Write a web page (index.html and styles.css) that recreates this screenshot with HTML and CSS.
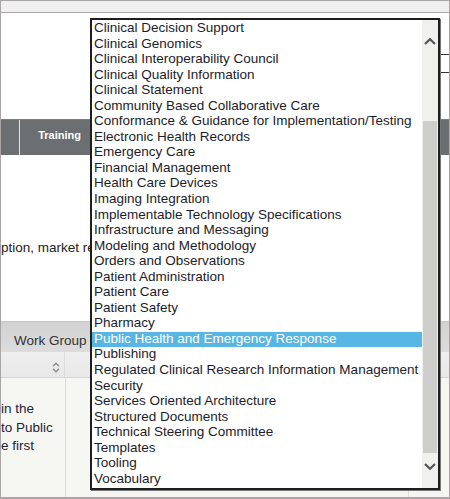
FILE: index.html
```html
<!DOCTYPE html>
<html lang="en">
<head>
    <meta charset="UTF-8">
    <meta name="viewport" content="width=device-width, initial-scale=1.0">
    <title>Work Groups</title>
    <link rel="stylesheet" href="styles.css">
</head>
<body>
    <div class="frame">
        <div class="topbar"></div>

        <div class="header">
            <div class="search"></div>
        </div>

        <div class="nav">
            <div class="nav-item nav-first"></div>
            <div class="nav-item">Training</div>
        </div>

        <div class="content">
            <p class="intro">ption, market re</p>
        </div>

        <div class="tabs">
            <div class="tab">Work Group</div>
        </div>

        <div class="thead">
            <div class="th th-first">
                <svg class="sort" width="8" height="11" viewBox="0 0 8 11">
                    <path d="M1 4.2 L4 1.2 L7 4.2 M1 6.8 L4 9.8 L7 6.8" fill="none" stroke="#8a8a8a" stroke-width="1.3"/>
                </svg>
            </div>
            <div class="th th-mid"></div>
            <div class="th th-last"></div>
        </div>

        <div class="tbody">
            <div class="td td-first">
                <div class="cell-text">in the<br>to Public<br>e first</div>
            </div>
            <div class="td td-mid"></div>
            <div class="td td-last"></div>
        </div>

        <!-- open work group list -->
        <div class="dropdown" role="listbox">
            <div class="options">
                <div class="option">Clinical Decision Support</div>
                <div class="option">Clinical Genomics</div>
                <div class="option">Clinical Interoperability Council</div>
                <div class="option">Clinical Quality Information</div>
                <div class="option">Clinical Statement</div>
                <div class="option">Community Based Collaborative Care</div>
                <div class="option">Conformance &amp; Guidance for Implementation/Testing</div>
                <div class="option">Electronic Health Records</div>
                <div class="option">Emergency Care</div>
                <div class="option">Financial Management</div>
                <div class="option">Health Care Devices</div>
                <div class="option">Imaging Integration</div>
                <div class="option">Implementable Technology Specifications</div>
                <div class="option">Infrastructure and Messaging</div>
                <div class="option">Modeling and Methodology</div>
                <div class="option">Orders and Observations</div>
                <div class="option">Patient Administration</div>
                <div class="option">Patient Care</div>
                <div class="option">Patient Safety</div>
                <div class="option">Pharmacy</div>
                <div class="option selected">Public Health and Emergency Response</div>
                <div class="option">Publishing</div>
                <div class="option">Regulated Clinical Research Information Management</div>
                <div class="option">Security</div>
                <div class="option">Services Oriented Architecture</div>
                <div class="option">Structured Documents</div>
                <div class="option">Technical Steering Committee</div>
                <div class="option">Templates</div>
                <div class="option">Tooling</div>
                <div class="option">Vocabulary</div>
            </div>
            <div class="scrollbar">
                <svg class="arrow arrow-up" width="12" height="7" viewBox="0 0 12 7">
                    <path d="M1 6 L6 1.2 L11 6" fill="none" stroke="#555" stroke-width="2.2"/>
                </svg>
                <div class="thumb"></div>
                <svg class="arrow arrow-down" width="12" height="7" viewBox="0 0 12 7">
                    <path d="M1 1 L6 5.8 L11 1" fill="none" stroke="#555" stroke-width="2.2"/>
                </svg>
            </div>
        </div>
    </div>
</body>
</html>
```

FILE: styles.css
```css
body {
    margin: 0;
    font-family: "Liberation Sans", Arial, sans-serif;
    font-size: 13.5px;
    color: #222;
}
.frame {
    position: relative;
    width: 450px;
    height: 499px;
    box-sizing: border-box;
    border: 1px solid #a9a5a5;
    border-bottom-width: 2px;
    display: flex;
    flex-direction: column;
    overflow: hidden;
    background: #fff;
}
.topbar {
    height: 11px;
    background: #f0f0f0;
    border-bottom: 1px solid #a8a8a8;
}
.header {
    height: 106px;
    display: flex;
    justify-content: flex-end;
}
.search {
    margin-top: 41px;
    width: 140px;
    height: 17px;
    border: 1px solid #333;
    border-right: none;
}
.nav {
    height: 36px;
    background: #6c6f71;
    border-top: 1px solid #7c7f81;
    box-sizing: border-box;
    display: flex;
}
.nav-item {
    color: #fff;
    font-size: 11px;
    font-weight: bold;
    line-height: 12px;
    padding: 9px 9px 0 18px;
    width: 43px;
    text-align: right;
}
.nav-first {
    width: 18px;
    padding: 0;
    border-right: 1px solid #e4e4e4;
}
.content {
    height: 166px;
}
.intro {
    margin: 85px 0 0 0;
    white-space: nowrap;
}
.tabs {
    height: 31px;
    box-sizing: border-box;
    background: linear-gradient(#d2d2d2, #dcdcdc);
    border-top: 1px solid #c6c6c6;
}
.tab {
    padding: 11px 0 0 13px;
    color: #333;
}
.thead {
    height: 26px;
    box-sizing: border-box;
    background: linear-gradient(#efefef, #e8e8e8);
    border-bottom: 1px solid #d6d6d6;
    display: flex;
}
.th, .td {
    border-right: 1px solid #dcdcdc;
}
.th-first, .td-first {
    width: 64px;
}
.th-mid, .td-mid {
    width: 342px;
}
.th-last, .td-last {
    flex: 1;
    border-right: none;
}
.th-first {
    display: flex;
    justify-content: flex-end;
    align-items: center;
    padding-right: 4px;
    box-sizing: border-box;
}
.sort {
    margin-top: 5px;
}
.tbody {
    flex: 1;
    background: #f6f7f3;
    display: flex;
}
.td-first {
    overflow: hidden;
}
.cell-text {
    margin: 22px 0 0 0;
    line-height: 18.7px;
    white-space: nowrap;
    color: #1f2238;
}

/* open listbox overlay */
.dropdown {
    position: absolute;
    left: 89px;
    top: 17px;
    width: 350px;
    height: 472px;
    box-sizing: border-box;
    border: 2px solid #1e1e1e;
    box-shadow: 1px 1px 0 #777;
    background: #fff;
    display: flex;
}
.options {
    width: 330px;
    padding-top: 1px;
}
.option {
    height: 15.55px;
    line-height: 13.2px;
    padding-left: 2px;
    white-space: nowrap;
    overflow: hidden;
    color: #1c1c2a;
}
.option.selected {
    background: #58b6e4;
    color: #fff;
}
.scrollbar {
    width: 16px;
    background: #f0f0ef;
    display: flex;
    flex-direction: column;
    align-items: center;
}
.arrow-up {
    margin-top: 18px;
}
.thumb {
    margin-top: 76px;
    width: 14px;
    height: 332px;
    background: #cdcdcc;
}
.arrow-down {
    margin-top: 10px;
}
```
